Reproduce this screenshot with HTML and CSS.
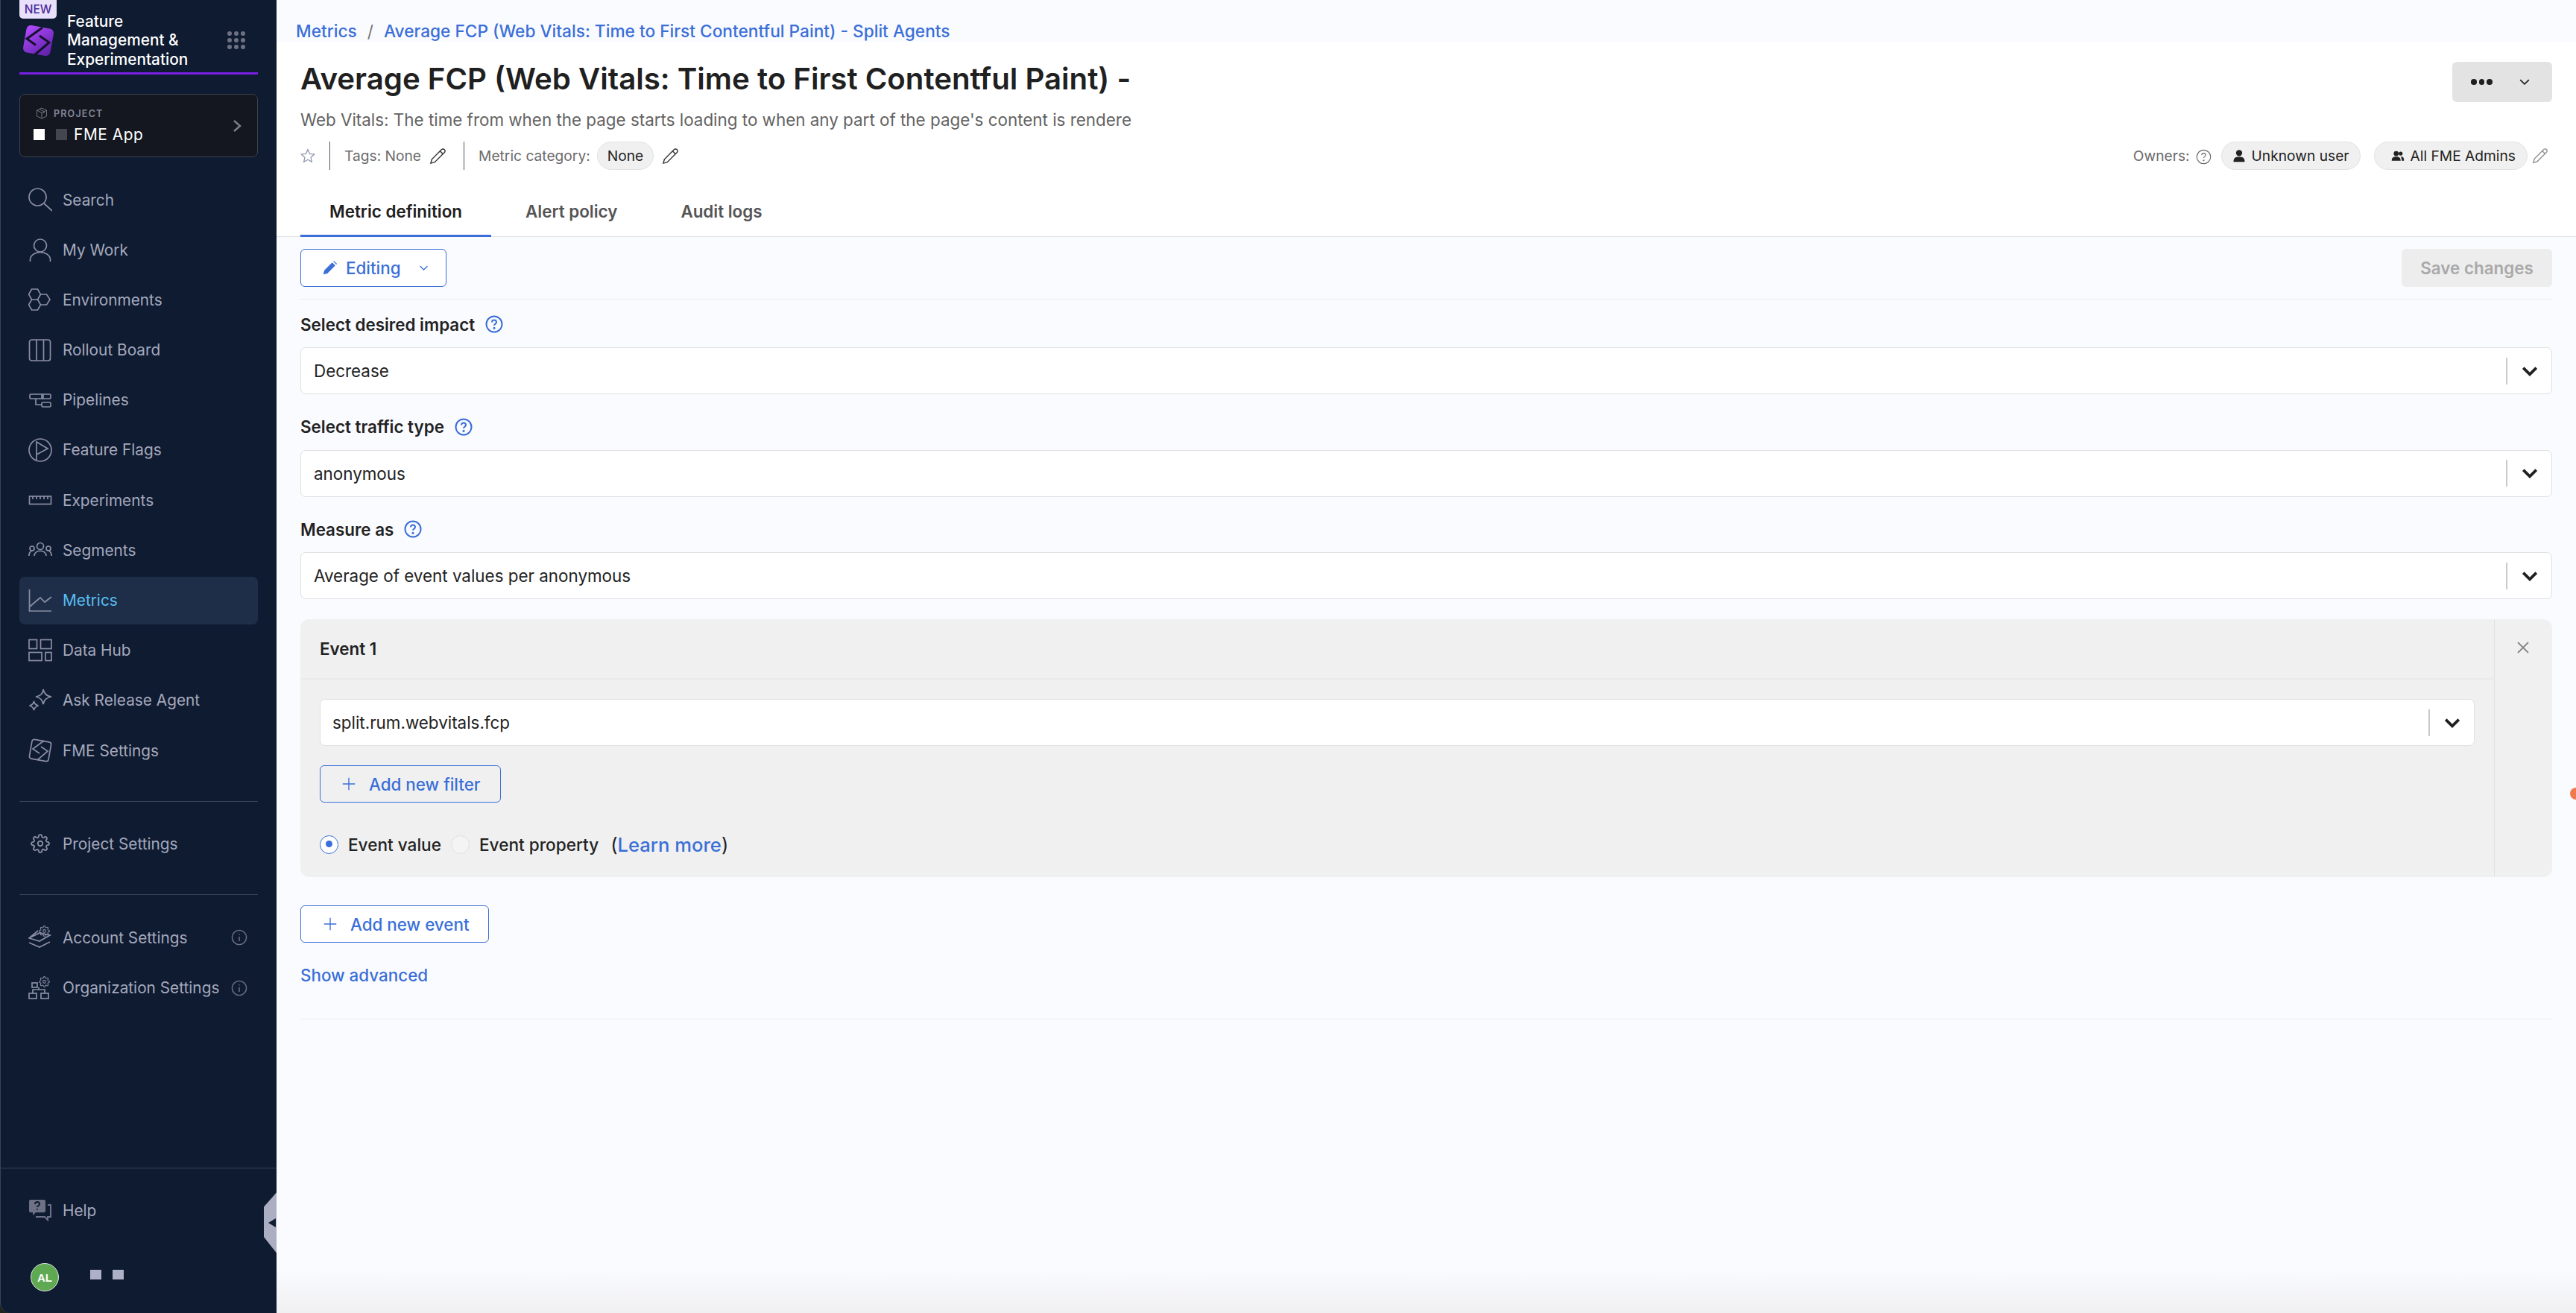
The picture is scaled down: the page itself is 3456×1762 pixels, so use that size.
FILE: index.html
```html
<!DOCTYPE html>
<html lang="en">
<head>
<meta charset="utf-8">
<title>Average FCP - Metrics</title>
<link rel="stylesheet" href="styles.css">
</head>
<body>
<svg class="defs" width="0" height="0">
  <symbol id="gear" viewBox="0 0 24 24"><path d="M12 15a3 3 0 1 0 0-6 3 3 0 0 0 0 6z"/><path d="M19.4 15a1.65 1.65 0 0 0 .33 1.82l.06.06a2 2 0 0 1 0 2.83 2 2 0 0 1-2.83 0l-.06-.06a1.65 1.65 0 0 0-1.82-.33 1.65 1.65 0 0 0-1 1.51V21a2 2 0 0 1-2 2 2 2 0 0 1-2-2v-.09A1.65 1.65 0 0 0 9 19.4a1.65 1.65 0 0 0-1.82.33l-.06.06a2 2 0 0 1-2.83 0 2 2 0 0 1 0-2.83l.06-.06a1.65 1.65 0 0 0 .33-1.82 1.65 1.65 0 0 0-1.51-1H3a2 2 0 0 1-2-2 2 2 0 0 1 2-2h.09A1.65 1.65 0 0 0 4.6 9a1.65 1.65 0 0 0-.33-1.82l-.06-.06a2 2 0 0 1 0-2.83 2 2 0 0 1 2.83 0l.06.06a1.65 1.65 0 0 0 1.82.33H9a1.65 1.65 0 0 0 1-1.51V3a2 2 0 0 1 2-2 2 2 0 0 1 2 2v.09a1.65 1.65 0 0 0 1 1.51 1.65 1.65 0 0 0 1.82-.33l.06-.06a2 2 0 0 1 2.83 0 2 2 0 0 1 0 2.83l-.06.06a1.65 1.65 0 0 0-.33 1.82V9a1.65 1.65 0 0 0 1.51 1H21a2 2 0 0 1 2 2 2 2 0 0 1-2 2h-.09a1.65 1.65 0 0 0-1.51 1z"/></symbol>
  <symbol id="pencil" viewBox="0 0 24 24"><path d="M17 3a2.85 2.83 0 1 1 4 4L7.5 20.5 2 22l1.5-5.5Z"/><path d="m15 5 4 4"/></symbol>
  <symbol id="help" viewBox="0 0 24 24"><circle cx="12" cy="12" r="10.5"/><path d="M9 9.5a3 3 0 0 1 6 0c0 2-3 2.2-3 4.2"/><circle cx="12" cy="17.4" r=".6"/></symbol>
  <symbol id="info" viewBox="0 0 24 24"><circle cx="12" cy="12" r="10.5"/><path d="M12 11v6.5"/><path d="M12 6.8v1.4"/></symbol>
  <symbol id="chev" viewBox="0 0 24 24"><path d="M5 8.5l7 7 7-7"/></symbol>
  <symbol id="plus" viewBox="0 0 24 24"><path d="M12 1v22M1 12h22"/></symbol>
</svg>
<div class="app">
  <aside class="sidebar">
    <div class="side-main">
      <div class="brand">
        <span class="new-badge">NEW</span>
        <svg class="logo" viewBox="0 0 45 45" width="45" height="45">
          <defs><linearGradient id="lg" x1="0" y1="0" x2="1" y2="1"><stop offset="0" stop-color="#b44dff"/><stop offset="1" stop-color="#5a1ea6"/></linearGradient></defs>
          <rect x="4" y="4" width="37" height="37" rx="6" transform="rotate(10 22.5 22.5)" fill="url(#lg)"/>
          <path d="M28 5L7 20l12 8.5M17 42l20-17-13-9" fill="none" stroke="#17112e" stroke-width="3"/>
        </svg>
        <div class="brand-text">Feature<br>Management &amp;<br>Experimentation</div>
        <svg class="apps" viewBox="0 0 24 24" width="24" height="24"><g fill="#6f7183"><circle cx="3" cy="3" r="3"/><circle cx="12" cy="3" r="3"/><circle cx="21" cy="3" r="3"/><circle cx="3" cy="12" r="3"/><circle cx="12" cy="12" r="3"/><circle cx="21" cy="12" r="3"/><circle cx="3" cy="21" r="3"/><circle cx="12" cy="21" r="3"/><circle cx="21" cy="21" r="3"/></g></svg>
      </div>
      <div class="project">
        <div class="project-info">
          <div class="project-label">
            <svg class="ico-thin" viewBox="0 0 16 16" width="16" height="16"><path d="M8 1l6.5 3v8L8 15l-6.5-3V4zM1.5 4L8 7.5 14.5 4M8 7.5V15M4.5 2.5l6.5 3.2v2.5"/></svg>
            <span>PROJECT</span>
          </div>
          <div class="project-name"><i class="sq sq-white"></i><i class="sq sq-gray"></i><span>FME App</span></div>
        </div>
        <svg class="project-chev" viewBox="0 0 12 16" width="12" height="16"><path d="M2 1l8 7-8 7"/></svg>
      </div>
      <nav class="nav">
        <a class="nav-item"><svg class="ico" viewBox="0 0 32 32" width="32" height="32"><circle cx="12.5" cy="12.5" r="11.5"/><path d="M21 21l11 10"/></svg><span>Search</span></a>
        <a class="nav-item"><svg class="ico" viewBox="0 0 32 32" width="32" height="32"><circle cx="16" cy="10.5" r="8.5"/><path d="M2.500 32v-2.500a13.500 10 0 0 1 27 0V32"/></svg><span>My Work</span></a>
        <a class="nav-item"><svg class="ico" viewBox="0 0 32 32" width="32" height="32"><path d="M.5 9l4-7h8l4 7-4 7h-8zM.5 23l4-7h8l4 7-4 7h-8zM16.500 9h8l4.500 7-4.500 7h-8l-4-7z"/></svg><span>Environments</span></a>
        <a class="nav-item"><svg class="ico" viewBox="0 0 32 32" width="32" height="32"><rect x="1.500" y="2" width="28" height="28" rx="3"/><path d="M11 2v28M20.500 2v28"/></svg><span>Rollout Board</span></a>
        <a class="nav-item"><svg class="ico" viewBox="0 0 32 32" width="32" height="32"><rect x="2" y="8" width="18" height="6" rx="1.500"/><rect x="18" y="8" width="12" height="6" rx="1.500"/><rect x="18" y="19" width="12" height="6" rx="1.500"/><path d="M10 14v8h8"/></svg><span>Pipelines</span></a>
        <a class="nav-item"><svg class="ico" viewBox="0 0 32 32" width="32" height="32"><circle cx="16" cy="16" r="15"/><path d="M11 29V5l15 9-15 8"/></svg><span>Feature Flags</span></a>
        <a class="nav-item"><svg class="ico" viewBox="0 0 32 32" width="32" height="32"><rect x="1.500" y="11" width="29" height="10.500"/><path d="M6 11v4M11 11v4M16 11v4M21 11v4M26 11v4"/></svg><span>Experiments</span></a>
        <a class="nav-item"><svg class="ico" viewBox="0 0 32 32" width="32" height="32"><circle cx="16" cy="11" r="4.500"/><path d="M8 24c0-9 16-9 16 0"/><circle cx="5" cy="14" r="3"/><path d="M.8 24c0-5 3-7 5-7"/><circle cx="27" cy="14" r="3"/><path d="M31.200 24c0-5-3-7-5-7"/></svg><span>Segments</span></a>
        <a class="nav-item active"><svg class="ico" viewBox="0 0 32 32" width="32" height="32"><path d="M1.500 1v29H31"/><path d="M2 24l14-12 6 6 9-7"/></svg><span>Metrics</span></a>
        <a class="nav-item"><svg class="ico" viewBox="0 0 32 32" width="32" height="32"><rect x="1" y="1.500" width="10.500" height="12"/><rect x="16.500" y="1.500" width="14.500" height="12"/><rect x="1" y="18.500" width="17" height="11"/><rect x="23" y="18.500" width="8" height="11"/></svg><span>Data Hub</span></a>
        <a class="nav-item"><svg class="ico" viewBox="0 0 32 32" width="32" height="32"><path d="M20 1c1 6 4 9 11 10-7 1-10 4-11 10-1-6-4-9-10-10 6-1 10-4 10-10z"/><path d="M7.500 17c.5 3 2 5 6 6-4 1-5.500 3-6 6-.5-3-2-5-6-6 4-1 5.500-3 6-6z"/></svg><span>Ask Release Agent</span></a>
        <a class="nav-item"><svg class="ico" viewBox="0 0 32 32" width="32" height="32"><rect x="3" y="3" width="26" height="26" rx="3" transform="rotate(10 16 16)"/><path d="M21 3L6 14l9 6M12 29l14-12-9-6"/></svg><span>FME Settings</span></a>
      </nav>
      <div class="side-rule rule-a"></div>
      <a class="nav-item"><svg class="ico" viewBox="0 0 32 32" width="32" height="32"><use href="#gear" x="3" y="3" width="26" height="26"/></svg><span>Project Settings</span></a>
      <div class="side-rule rule-b"></div>
      <a class="nav-item"><svg class="ico" viewBox="0 0 32 32" width="32" height="32"><path d="M1 17l14-7 14 3-14 8zM1 23l14 6 14-7M1 17l12-10"/><use href="#gear" x="14" y="0" width="15" height="15"/></svg><span>Account Settings</span><svg class="ico-info" width="22" height="22"><use href="#info"/></svg></a>
      <a class="nav-item"><svg class="ico" viewBox="0 0 32 32" width="32" height="32"><rect x="1" y="23" width="10" height="7"/><rect x="17" y="23" width="10" height="7"/><rect x="5" y="9" width="7" height="6"/><path d="M14 18H6v5M14 18h8v5M14 18v-3"/><use href="#gear" x="14" y="0" width="15" height="15"/></svg><span>Organization Settings</span><svg class="ico-info" width="22" height="22"><use href="#info"/></svg></a>
    </div>
    <div class="side-foot">
      <a class="nav-item foot-help">
        <svg class="ico-fill" viewBox="0 0 32 32" width="32" height="32"><path d="M3 2h18a2 2 0 0 1 2 2v13a2 2 0 0 1-2 2H10l-4 4v-4H3a2 2 0 0 1-2-2V4a2 2 0 0 1 2-2z"/><path class="cut" d="M9 8a3 3 0 0 1 6 0c0 2-3 2-3 4M12 14v1.500"/><path class="open" d="M26 9h4v16h-4v4l-4-4H10"/></svg>
        <span>Help</span>
      </a>
      <div class="user"><span class="avatar">AL</span><i class="sq-user"></i><i class="sq-user"></i></div>
    </div>
    <div class="collapse"><i></i></div>
  </aside>
  <main class="main">
    <div class="crumbs"><a>Metrics</a><span class="sep">/</span><a>Average FCP (Web Vitals: Time to First Contentful Paint) - Split Agents</a></div>
    <header class="head">
      <div class="head-top">
        <div class="title-row">
          <h1>Average FCP (Web Vitals: Time to First Contentful Paint) -</h1>
          <button class="more"><span class="dots"><i></i><i></i><i></i></span><svg class="stroke-dark" width="20" height="20"><use href="#chev"/></svg></button>
        </div>
        <p class="sub">Web Vitals: The time from when the page starts loading to when any part of the page's content is rendere</p>
        <div class="meta">
          <svg class="star" viewBox="0 0 24 24" width="20" height="20"><path d="M12 2l3 6.800 7.400.8-5.500 5 1.500 7.300L12 18.200 5.600 22 7.100 14.600l-5.500-5 7.400-.8z"/></svg>
          <span class="vline"></span>
          <span class="meta-text">Tags: None</span>
          <svg class="pen" width="23" height="23"><use href="#pencil"/></svg>
          <span class="vline"></span>
          <span class="meta-text">Metric category:</span>
          <span class="pill pill-none">None</span>
          <svg class="pen" width="23" height="23"><use href="#pencil"/></svg>
          <div class="owners">
            <span class="meta-text">Owners:</span>
            <svg class="ico-q" width="21" height="21"><use href="#help"/></svg>
            <span class="pill pill-user"><svg viewBox="0 0 24 24" width="18" height="18"><circle cx="12" cy="7" r="5.500"/><path d="M2 23c0-8 4-9 10-9s10 1 10 9z"/></svg>Unknown user</span>
            <span class="pill pill-team"><svg viewBox="0 0 24 24" width="18" height="18"><circle cx="9" cy="8" r="4.500"/><circle cx="17" cy="8" r="3.500"/><path d="M1 21c0-6 3-7.500 8-7.500s8 1.500 8 7.500zM18.500 13.500c3 0 4.500 2 4.500 7.500h-4c0-3-.5-5.500-2-7z"/></svg>All FME Admins</span>
            <svg class="pen pen-soft" width="22" height="22"><use href="#pencil"/></svg>
          </div>
        </div>
      </div>
      <div class="tabs">
        <a class="tab active">Metric definition</a>
        <a class="tab">Alert policy</a>
        <a class="tab">Audit logs</a>
      </div>
    </header>
    <section class="content">
      <div class="toolbar">
        <button class="btn btn-edit">
          <svg viewBox="0 0 24 24" width="22" height="22"><path class="fill-blue" d="M3 21l1.500-6L16 3.500l4.500 4.500L9 19.500zM17.500 2l1-1 4.500 4.500-1 1z"/></svg>
          <span>Editing</span>
          <svg class="stroke-blue" width="17" height="17"><use href="#chev"/></svg>
        </button>
        <button class="btn-save">Save changes</button>
      </div>
      <div class="field first">
        <label class="label">Select desired impact<svg class="ico-help" width="24" height="24"><use href="#help"/></svg></label>
        <div class="select"><span>Decrease</span><i class="sel-bar"></i><svg class="sel-chev" width="30" height="30"><use href="#chev"/></svg></div>
      </div>
      <div class="field">
        <label class="label">Select traffic type<svg class="ico-help" width="24" height="24"><use href="#help"/></svg></label>
        <div class="select"><span>anonymous</span><i class="sel-bar"></i><svg class="sel-chev" width="30" height="30"><use href="#chev"/></svg></div>
      </div>
      <div class="field">
        <label class="label">Measure as<svg class="ico-help" width="24" height="24"><use href="#help"/></svg></label>
        <div class="select"><span>Average of event values per anonymous</span><i class="sel-bar"></i><svg class="sel-chev" width="30" height="30"><use href="#chev"/></svg></div>
      </div>
      <div class="event">
        <div class="event-left">
          <div class="event-head">Event 1</div>
          <div class="event-body">
            <div class="select select-inner"><span>split.rum.webvitals.fcp</span><i class="sel-bar"></i><svg class="sel-chev" width="30" height="30"><use href="#chev"/></svg></div>
            <button class="btn btn-add btn-filter"><svg class="stroke-blue" width="18" height="18"><use href="#plus"/></svg><span>Add new filter</span></button>
            <div class="radios">
              <span class="radio on"></span><span class="radio-text">Event value</span>
              <span class="radio"></span><span class="radio-text">Event property</span>
              <span class="learn"><span class="paren">(</span><a>Learn more</a><span class="paren">)</span></span>
            </div>
          </div>
        </div>
        <div class="event-side"><svg class="close" viewBox="0 0 16 16" width="16" height="16"><path d="M1 1l14 14M15 1L1 15"/></svg></div>
      </div>
      <button class="btn btn-add btn-event"><svg class="stroke-blue" width="18" height="18"><use href="#plus"/></svg><span>Add new event</span></button>
      <a class="show-adv">Show advanced</a>
      <div class="end-rule"></div>
    </section>
    <span class="orange-dot"></span>
    <div class="fade"></div>
  </main>
</div>
</body>
</html>
```
FILE: styles.css
```css
* { box-sizing: border-box; }
html, body { margin: 0; height: 100%; overflow: hidden; }
body { font-family: Inter, "Liberation Sans", sans-serif; background: #fafbff; color: #222; }
.defs { position: absolute; }
svg { display: block; flex: none; }
button { font-family: inherit; cursor: pointer; }
i { display: block; }

.app { display: flex; height: 1762px; background: #20241f; }

/* Sidebar */
.sidebar { position: relative; width: 371px; flex: none; display: flex; flex-direction: column; background: #0e1b31; border-left: 1px solid #3b4152; border-bottom-left-radius: 14px; }
.side-main { flex: 1; padding: 0 25px; display: flex; flex-direction: column; }
.brand { position: relative; height: 100px; display: flex; align-items: center; padding: 16px 17px 5px 3px; gap: 16px; border-bottom: 3px solid #7a1fe6; }
.new-badge { position: absolute; left: 0; top: 0; width: 50px; height: 25px; background: #e9e1fb; color: #4d2a9c; font-size: 15.500px; font-weight: 500; text-align: center; line-height: 25px; border-radius: 0 0 5px 5px; }
.brand-text { flex: 1; color: #fff; font-size: 20.800px; font-weight: 500; line-height: 25.300px; white-space: nowrap; }
.project { height: 85px; margin-top: 26px; background: #14171f; border: 1px solid #3d414c; border-radius: 7px; display: flex; align-items: center; justify-content: space-between; padding: 0 21px 0 18px; }
.project-label { display: flex; align-items: center; gap: 8px; color: #85879a; font-size: 12.500px; font-weight: 600; letter-spacing: 1.200px; margin-left: 3px; }
.ico-thin { fill: none; stroke: #70727f; stroke-width: 1; }
.project-name { display: flex; align-items: center; color: #fff; font-size: 20.800px; letter-spacing: .6px; margin-top: 8px; }
.sq { width: 15px; height: 15px; margin-right: 15px; }
.sq-white { background: #fff; }
.sq-gray { background: #43454f; margin-right: 9px; }
.project-chev { fill: none; stroke: #7b7d8a; stroke-width: 2.500; }

.nav { display: flex; flex-direction: column; gap: 3.200px; margin-top: 25px; }
.nav-item { height: 64px; flex: none; display: flex; align-items: center; gap: 14px; padding: 0 14px 0 12px; color: #a5a8bc; font-size: 20.800px; border-radius: 7px; white-space: nowrap; }
.nav-item.active { background: #1e2e48; color: #58bdf3; }
.ico { fill: none; stroke: #8b8ea3; stroke-width: 1.700; }
.ico-info { fill: none; stroke: #6f7186; stroke-width: 1.600; margin-left: auto; }
.side-rule { height: 1px; background: #3a4356; flex: none; }
.rule-a { margin: 36px 0 24px; }
.rule-b { margin: 36px 0 25px; }
.rule-b + .nav-item + .nav-item { margin-top: 3.800px; }
.ico-fill { fill: #6f7186; }
.ico-fill .cut { fill: none; stroke: #0e1b31; stroke-width: 2; }
.ico-fill .open { fill: none; stroke: #6f7186; stroke-width: 2; }

.side-foot { height: 195px; border-top: 1px solid #3a4356; padding: 24px 25px 0; flex: none; }
.user { display: flex; align-items: center; margin: 39px 0 0 15px; }
.avatar { width: 38px; height: 38px; border-radius: 50%; background: #5fa953; color: #fff; border: 1px solid #dfe7dc; font-family: "Liberation Sans", sans-serif; font-size: 15px; font-weight: 700; display: flex; align-items: center; justify-content: center; }
.sq-user { width: 15px; height: 13px; background: #adb0c6; margin: 0 15px 0 0; position: relative; top: -4px; }
.avatar + .sq-user { margin-left: 42px; }
.foot-help { height: 64px; }
.collapse { position: absolute; right: -2px; top: 1598px; width: 19px; height: 86px; background: #acaec1; clip-path: polygon(100% 0, 100% 100%, 0 72%, 0 25%); display: flex; align-items: center; justify-content: center; }
.collapse i { width: 0; height: 0; border-style: solid; border-width: 6px 10px 6px 0; border-color: transparent #0e1b31 transparent transparent; margin-left: 2px; }

/* Main */
.main { position: relative; flex: 1; min-width: 0; display: flex; flex-direction: column; background: #fafbff; }
.crumbs { height: 56px; flex: none; padding: 27px 0 0 26px; display: flex; align-items: center; font-size: 22.700px; font-weight: 500; color: #3a6fd8; line-height: 26px; }
.crumbs .sep { color: #777; font-weight: 400; margin: 0 14px; }
.head { height: 262px; flex: none; background: #fff; display: flex; flex-direction: column; justify-content: space-between; }
.head-top { padding: 26px 32px 0; }
.title-row { display: flex; justify-content: space-between; align-items: flex-start; }
h1 { margin: 0; font-size: 40.200px; line-height: 48px; font-weight: 600; color: #202020; white-space: nowrap; }
.more { width: 134px; height: 54px; margin-top: 1px; background: #e3e3e3; border: 0; border-radius: 6px; display: flex; align-items: center; justify-content: space-between; padding: 0 27px 0 25px; }
.dots { display: flex; gap: 3px; }
.dots i { width: 7.500px; height: 7.500px; border-radius: 50%; background: #202020; }
.stroke-dark { fill: none; stroke: #202020; stroke-width: 2; }
.sub { margin: 9px 0 0; font-size: 22.400px; line-height: 30px; color: #636363; white-space: nowrap; }
.meta { display: flex; align-items: center; height: 38px; margin-top: 14px; gap: 0; }
.star { fill: none; stroke: #8f97ad; stroke-width: 1.500; }
.vline { width: 1px; height: 38px; background: #555; margin: 0 19px; }
.meta-text { font-size: 19.200px; color: #6b6b6b; white-space: nowrap; }
.pen { fill: none; stroke: #333; stroke-width: 1.500; margin-left: 11px; }
.meta .pen + .vline { margin-left: 23px; }
.pill { height: 38px; display: inline-flex; align-items: center; border: 1px solid #e2e2e2; background: #f0f0f0; border-radius: 19px; font-size: 19.200px; color: #222; white-space: nowrap; }
.pill-none { margin-left: 9px; padding: 0 13px; }
.pill svg { fill: #222; }
.owners { margin-left: auto; display: flex; align-items: center; }
.ico-q { fill: none; stroke: #666; stroke-width: 1.300; margin: 2px 0 0 8px; }
.pill-user { margin-left: 13px; padding: 0 14px; gap: 8px; }
.pill-team { margin-left: 18px; padding: 0 15px 0 22px; gap: 8px; }
.pen-soft { stroke: #8d8d8d; margin-left: 6px; margin-right: 5px; }
.tabs { display: flex; gap: 7px; padding-left: 32px; border-bottom: 1px solid #dfe0e5; height: 66px; flex: none; }
.tab { height: 66px; padding: 0 39px 3px; display: flex; align-items: center; font-size: 22.400px; font-weight: 600; color: #555; white-space: nowrap; }
.tab.active { color: #202020; border-bottom: 3px solid #3a6fd8; padding-bottom: 0; }

/* Content */
.content { padding: 0 32px; display: flex; flex-direction: column; align-items: stretch; }
.toolbar { height: 84px; padding-top: 16px; display: flex; justify-content: space-between; align-items: flex-start; border-bottom: 1px solid #ebecef; }
.btn { display: inline-flex; align-items: center; background: transparent; border: 1px solid #3a6fd8; border-radius: 6px; color: #3a6fd8; font-size: 22.400px; font-weight: 500; white-space: nowrap; }
.btn-edit { width: 196px; height: 51px; padding: 0 0 0 27px; gap: 11px; background: #fff; }
.btn-edit .stroke-blue { margin-left: 11px; }
.fill-blue { fill: #3a6fd8; }
.stroke-blue { fill: none; stroke: #3a6fd8; stroke-width: 1.800; }
.btn-save { width: 202px; height: 51px; border: 0; border-radius: 6px; background: #ededed; color: #a9a9a9; font-size: 22.400px; font-weight: 600; }
.field { margin-top: 28.500px; }
.field.first { margin-top: 18px; }
.label { display: flex; align-items: center; gap: 14px; height: 30px; font-size: 22.400px; font-weight: 600; color: #222; }
.ico-help { fill: none; stroke: #3a6fd8; stroke-width: 2; }
.select { height: 63px; margin-top: 16px; background: #fff; border: 1px solid #e0e0e2; border-radius: 7px; display: flex; align-items: center; padding: 0 0 0 17px; font-size: 22.400px; color: #222; }
.select span { flex: 1; }
.sel-bar { width: 2px; height: 36px; background: #c9c9c9; }
.sel-chev { fill: none; stroke: #202020; stroke-width: 3; margin: 0 14px 0 15px; }
.event { display: flex; height: 346px; margin-top: 27px; background: #f0f0f0; border-radius: 12px; }
.event-left { flex: 1; min-width: 0; }
.event-head { height: 81px; padding-left: 26px; display: flex; align-items: center; font-size: 22.400px; font-weight: 600; color: #222; border-bottom: 2px solid #eaeaea; }
.event-body { padding: 26px 26px 0; display: flex; flex-direction: column; align-items: flex-start; }
.select-inner { width: 100%; height: 63px; margin-top: 0; padding-left: 16px; }
.btn-add { height: 50px; gap: 18px; }
.btn-filter { width: 243px; margin-top: 26px; padding-left: 29px; }
.btn-event { width: 253px; margin-top: 38px; padding-left: 30px; align-self: flex-start; background: #fff; }
.radios { display: flex; align-items: center; margin-top: 41px; height: 30px; }
.radio { width: 25px; height: 25px; border-radius: 50%; border: 1px solid #e0e0e0; background: #f4f4f4; position: relative; }
.radio.on { background: #fff; border: 1.500px solid #3a6fd8; }
.radio.on::after { content: ""; position: absolute; left: 6.500px; top: 6.500px; width: 9px; height: 9px; border-radius: 50%; background: #3a6fd8; }
.radio-text { font-size: 22.600px; font-weight: 500; color: #222; margin: 0 13px; white-space: nowrap; }
.learn { font-size: 25.600px; font-weight: 500; margin-left: 3px; display: flex; align-items: center; white-space: nowrap; }
.learn a { color: #3a6fd8; }
.paren { color: #222; font-weight: 400; }
.event-side { width: 78px; flex: none; border-left: 1px solid #e2e2e2; padding: 30px 0 0 30px; }
.close { fill: none; stroke: #888; stroke-width: 1.800; }
.show-adv { margin-top: 29px; height: 30px; line-height: 30px; font-size: 22.400px; font-weight: 500; color: #3a6fd8; }
.end-rule { height: 1px; background: #eeeef0; margin-top: 43px; }
.orange-dot { position: absolute; right: -8px; top: 1057px; width: 16px; height: 16px; border-radius: 50%; background: #f07a4d; }
.fade { position: absolute; left: 0; right: 0; bottom: 0; height: 60px; background: linear-gradient(to bottom, rgba(240,240,242,0), #f0f0f2); pointer-events: none; }
```
